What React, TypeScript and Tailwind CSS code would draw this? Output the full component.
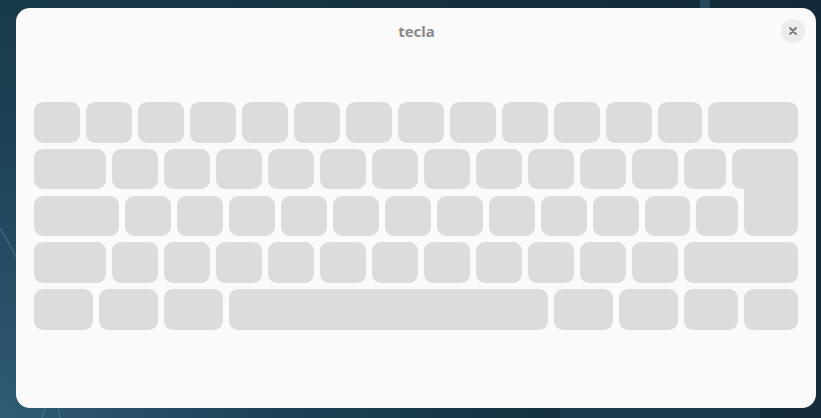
import { Fragment } from "react"

const Key = ({ w }: { w: number }) => (
  <div className="h-full shrink-0 rounded-[9px] bg-[#dcdcde]" style={{ width: w }} />
)

const rows: number[][] = [
  [46, 46, 46, 46, 46, 46, 46, 46, 46, 46, 46, 46, 44, 90],
  [72, 46, 46, 46, 46, 46, 46, 46, 46, 46, 46, 46, 42],
  [85, 46, 46, 46, 46, 46, 46, 46, 46, 46, 46, 45, 42],
  [72, 46, 46, 46, 46, 46, 46, 46, 46, 46, 46, 46, 114],
  [59, 59, 59, 319, 59, 59, 54, 54],
]

const Keyboard = () => {
  return (
    <div className="flex flex-col gap-[6.25px]">
      {rows.map((row, i) => (
        <div key={i} className="flex h-[40.5px] gap-[6px]">
          {row.map((w, j) => (
            <Fragment key={j}>
              <Key w={w} />
            </Fragment>
          ))}
          {/* enter key: two overlapping parts */}
          {i === 1 && (
            <div className="relative h-full w-[66px] shrink-0 rounded-[9px] bg-[#dcdcde]">
              <div className="absolute right-0 top-0 h-[87.25px] w-[54px] rounded-[9px] bg-[#dcdcde]" />
            </div>
          )}
          {i === 2 && <div className="w-[54px] shrink-0" />}
        </div>
      ))}
    </div>
  )
}

const App = () => {
  return (
    <div className="relative h-[418px] w-[821px] overflow-hidden bg-[radial-gradient(circle_at_0%_100%,#2f5b75_0%,#1d4256_30%,#15313f_60%,#122b38_100%)] pl-[16px] pt-[8px]">
      <svg className="absolute left-0 top-0" width="821" height="418" viewBox="0 0 821 418" fill="none">
        <path d="M0 228 C 20 260, 40 300, 60 418" stroke="#5d7f92" strokeOpacity="0.6" strokeWidth="1.2" />
        <path d="M42 418 L 45 408" stroke="#5d7f92" strokeOpacity="0.6" strokeWidth="1.2" />
        <rect x="700" y="0" width="10" height="8" fill="#27485a" />
        <rect x="560" y="408" width="200" height="10" fill="#1b3a4a" />
      </svg>
      <div className="relative flex h-[400px] w-[800px] flex-col rounded-[14px] bg-[#fafafa] font-['Noto_Sans',sans-serif]">
        <div className="grid h-[46px] grid-cols-[1fr_auto_1fr] items-center pl-[12px] pr-[11px]">
          <div />
          <span className="text-[15px] font-bold text-[#8a8a8a]">tecla</span>
          <div className="flex justify-end">
            <button className="flex h-[24px] w-[24px] items-center justify-center rounded-full bg-[#ececec]">
              <svg width="10" height="10" viewBox="0 0 10 10">
                <path d="M2 2 L8 8 M8 2 L2 8" stroke="#787878" strokeWidth="1.8" strokeLinecap="round" />
              </svg>
            </button>
          </div>
        </div>
        <div className="mt-[48px] px-[18px]">
          <Keyboard />
        </div>
      </div>
    </div>
  )
}

export default App
